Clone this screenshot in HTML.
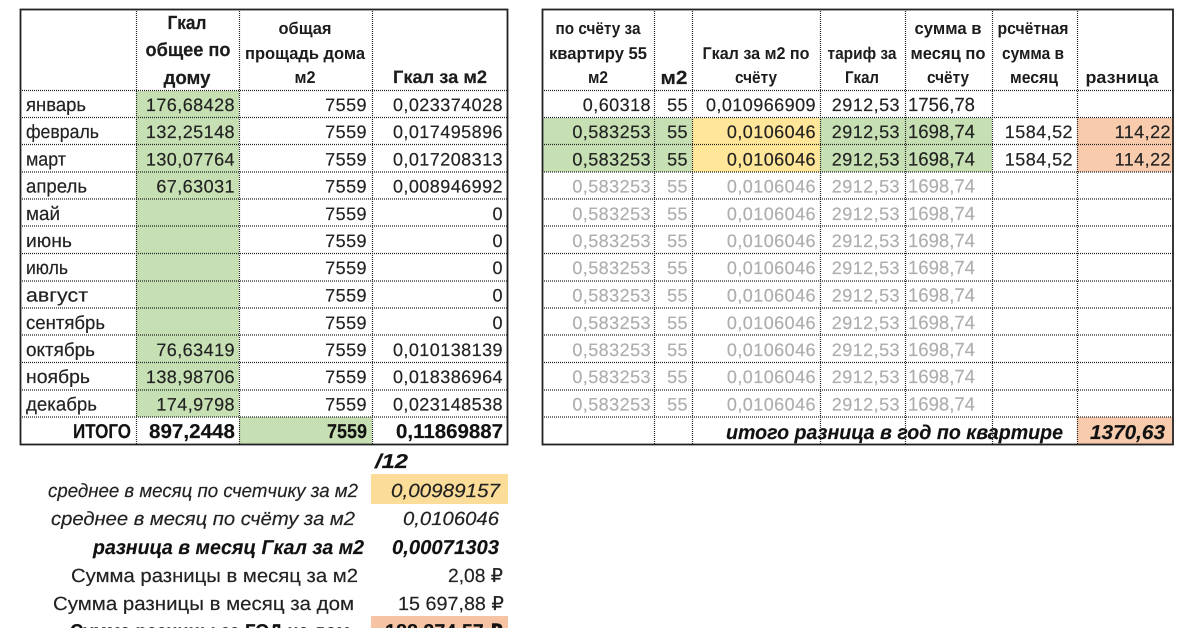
<!DOCTYPE html>
<html lang="ru">
<head>
<meta charset="utf-8">
<title>Таблица</title>
<style>
html,body{margin:0;padding:0;background:#fff;width:1200px;height:628px;overflow:hidden}
svg{display:block}
text{font-family:"Liberation Sans","DejaVu Sans",sans-serif;font-size:19px;fill:#222;stroke:#222;stroke-width:.18px;text-rendering:geometricPrecision}
.n{text-anchor:end;letter-spacing:.45px;font-size:18px}
.g{fill:#aeaeae;stroke:#aeaeae}
.h{font-weight:bold;font-size:19px;text-anchor:middle;fill:#1c1c1c}
.s{font-weight:bold;font-size:17px;text-anchor:middle;fill:#1c1c1c;stroke-width:0}
.b{font-weight:bold;font-size:20px;fill:#111}
.i{font-style:italic}
</style>
</head>
<body>
<svg width="1200" height="628" viewBox="0 0 1200 628" xmlns="http://www.w3.org/2000/svg">
<rect width="1200" height="628" fill="#fff"/>
<!-- fills -->
<rect x="136" y="91" width="103" height="326" fill="#c6e0b4"/>
<rect x="239" y="417" width="133" height="27" fill="#c6e0b4"/>
<rect x="542" y="118" width="150" height="54" fill="#c6e0b4"/>
<rect x="692" y="118" width="128" height="54" fill="#ffe699"/>
<rect x="820" y="118" width="172" height="54" fill="#c6e0b4"/>
<rect x="1077" y="118" width="96" height="54" fill="#f8cbad"/>
<rect x="1077" y="417" width="96" height="27" fill="#f8cbad"/>
<rect x="371" y="474" width="137" height="30" fill="#fbdc98"/>
<rect x="371" y="616" width="137" height="12" fill="#f6c4a4"/>
<!-- grid -->
<g fill="none" stroke="#222" stroke-width="1.200" stroke-dasharray="1 1">
<path d="M20 90.500H507M20 117.500H507M20 144.500H507M20 172H507M20 199H507M20 226H507M20 253.500H507M20 281H507M20 308H507M20 335H507M20 362.500H507M20 390H507M20 417H507"/>
<path d="M136.500 9V444M239.500 9V444M372.500 9V444"/>
<path d="M542 90.500H1173M542 117.500H1173M542 144.500H1173M542 172H1173M542 199H1173M542 226H1173M542 253.500H1173M542 281H1173M542 308H1173M542 335H1173M542 362.500H1173M542 390H1173M542 417H1173"/>
<path d="M654.500 9V444M692.500 9V444M820.500 9V444M905.500 9V444M992.500 9V444M1077.500 9V444"/>
</g>
<rect x="20.500" y="9.500" width="487" height="435" fill="none" stroke="#222" stroke-width="1.800"/>
<rect x="542.500" y="9.500" width="630.500" height="435" fill="none" stroke="#222" stroke-width="1.800"/>

<!-- table 1 header -->
<text class="h" x="187" y="29" textLength="39" lengthAdjust="spacingAndGlyphs">Гкал</text>
<text class="h" x="188" y="56" textLength="85" lengthAdjust="spacingAndGlyphs">общее по</text>
<text class="h" x="187" y="84" textLength="47" lengthAdjust="spacingAndGlyphs">дому</text>
<text class="s" x="305" y="34" textLength="53" lengthAdjust="spacingAndGlyphs">общая</text>
<text class="s" x="305" y="59" textLength="120" lengthAdjust="spacingAndGlyphs">прощадь дома</text>
<text class="s" x="305" y="83" textLength="21" lengthAdjust="spacingAndGlyphs">м2</text>
<text class="h" x="440" y="83" textLength="94" lengthAdjust="spacingAndGlyphs" style="font-size:18px">Гкал за м2</text>

<!-- table 1 labels -->
<text x="26" y="111" textLength="60" lengthAdjust="spacingAndGlyphs">январь</text>
<text x="26" y="138" textLength="73" lengthAdjust="spacingAndGlyphs">февраль</text>
<text x="26" y="165.500" textLength="40" lengthAdjust="spacingAndGlyphs">март</text>
<text x="26" y="192.500" textLength="61" lengthAdjust="spacingAndGlyphs">апрель</text>
<text x="26" y="220" textLength="34" lengthAdjust="spacingAndGlyphs">май</text>
<text x="26" y="247" textLength="46" lengthAdjust="spacingAndGlyphs">июнь</text>
<text x="26" y="274" textLength="42" lengthAdjust="spacingAndGlyphs">июль</text>
<text x="26" y="301.500" textLength="62" lengthAdjust="spacingAndGlyphs">август</text>
<text x="26" y="329" textLength="79" lengthAdjust="spacingAndGlyphs">сентябрь</text>
<text x="26" y="356" textLength="69" lengthAdjust="spacingAndGlyphs">октябрь</text>
<text x="26" y="383" textLength="64" lengthAdjust="spacingAndGlyphs">ноябрь</text>
<text x="26" y="410.500" textLength="71" lengthAdjust="spacingAndGlyphs">декабрь</text>
<!-- table 1 col 1 -->
<text class="n" x="235" y="111">176,68428</text>
<text class="n" x="235" y="138">132,25148</text>
<text class="n" x="235" y="165.500">130,07764</text>
<text class="n" x="235" y="192.500">67,63031</text>
<text class="n" x="235" y="356">76,63419</text>
<text class="n" x="235" y="383">138,98706</text>
<text class="n" x="235" y="410.500">174,9798</text>
<!-- table 1 col 2 -->
<text class="n" x="367" y="111">7559</text>
<text class="n" x="367" y="138">7559</text>
<text class="n" x="367" y="165.500">7559</text>
<text class="n" x="367" y="192.500">7559</text>
<text class="n" x="367" y="220">7559</text>
<text class="n" x="367" y="247">7559</text>
<text class="n" x="367" y="274">7559</text>
<text class="n" x="367" y="301.500">7559</text>
<text class="n" x="367" y="329">7559</text>
<text class="n" x="367" y="356">7559</text>
<text class="n" x="367" y="383">7559</text>
<text class="n" x="367" y="410.500">7559</text>
<!-- table 1 col 3 -->
<text class="n" x="503" y="111">0,023374028</text>
<text class="n" x="503" y="138">0,017495896</text>
<text class="n" x="503" y="165.500">0,017208313</text>
<text class="n" x="503" y="192.500">0,008946992</text>
<text class="n" x="503" y="220">0</text>
<text class="n" x="503" y="247">0</text>
<text class="n" x="503" y="274">0</text>
<text class="n" x="503" y="301.500">0</text>
<text class="n" x="503" y="329">0</text>
<text class="n" x="503" y="356">0,010138139</text>
<text class="n" x="503" y="383">0,018386964</text>
<text class="n" x="503" y="410.500">0,023148538</text>
<!-- table 1 total -->
<text class="b" x="73" y="438" textLength="58" lengthAdjust="spacingAndGlyphs">ИТОГО</text>
<text class="b" x="149" y="438" textLength="86" lengthAdjust="spacingAndGlyphs">897,2448</text>
<text class="b" x="327" y="438" textLength="40" lengthAdjust="spacingAndGlyphs">7559</text>
<text class="b" x="396" y="438" textLength="107" lengthAdjust="spacingAndGlyphs">0,11869887</text>

<!-- table 2 header -->
<text class="s" x="598" y="34" textLength="85" lengthAdjust="spacingAndGlyphs">по счёту за</text>
<text class="s" x="598" y="59" textLength="98" lengthAdjust="spacingAndGlyphs">квартиру 55</text>
<text class="s" x="598" y="83" textLength="20" lengthAdjust="spacingAndGlyphs">м2</text>
<text class="h" x="674" y="84" textLength="27" lengthAdjust="spacingAndGlyphs">м2</text>
<text class="s" x="756" y="59" textLength="107" lengthAdjust="spacingAndGlyphs">Гкал за м2 по</text>
<text class="s" x="756" y="83" textLength="42" lengthAdjust="spacingAndGlyphs">счёту</text>
<text class="s" x="862" y="59" textLength="69" lengthAdjust="spacingAndGlyphs">тариф за</text>
<text class="s" x="862" y="83" textLength="34" lengthAdjust="spacingAndGlyphs">Гкал</text>
<text class="s" x="948" y="34" textLength="67" lengthAdjust="spacingAndGlyphs">сумма в</text>
<text class="s" x="948" y="59" textLength="75" lengthAdjust="spacingAndGlyphs">месяц по</text>
<text class="s" x="948" y="83" textLength="42" lengthAdjust="spacingAndGlyphs">счёту</text>
<text class="s" x="1033" y="34" textLength="71" lengthAdjust="spacingAndGlyphs">рсчётная</text>
<text class="s" x="1033" y="59" textLength="62" lengthAdjust="spacingAndGlyphs">сумма в</text>
<text class="s" x="1034" y="83" textLength="48" lengthAdjust="spacingAndGlyphs">месяц</text>
<text class="s" x="1122" y="83" textLength="73" lengthAdjust="spacingAndGlyphs">разница</text>

<!-- table 2 rows -->
<text class="n" x="651" y="111">0,60318</text><text class="n" x="688" y="111">55</text><text class="n" x="816" y="111">0,010966909</text><text class="n" x="900" y="111">2912,53</text><text x="908" y="111" textLength="67" lengthAdjust="spacingAndGlyphs">1756,78</text>

<text class="n" x="651" y="138">0,583253</text><text class="n" x="688" y="138">55</text><text class="n" x="816" y="138">0,0106046</text><text class="n" x="900" y="138">2912,53</text><text x="908" y="138" textLength="67" lengthAdjust="spacingAndGlyphs">1698,74</text><text class="n" x="1073" y="138">1584,52</text><text class="n" x="1171" y="138">114,22</text>

<text class="n" x="651" y="165.500">0,583253</text><text class="n" x="688" y="165.500">55</text><text class="n" x="816" y="165.500">0,0106046</text><text class="n" x="900" y="165.500">2912,53</text><text x="908" y="165.500" textLength="67" lengthAdjust="spacingAndGlyphs">1698,74</text><text class="n" x="1073" y="165.500">1584,52</text><text class="n" x="1171" y="165.500">114,22</text>

<text class="n g" x="651" y="192.500">0,583253</text><text class="n g" x="688" y="192.500">55</text><text class="n g" x="816" y="192.500">0,0106046</text><text class="n g" x="900" y="192.500">2912,53</text><text class="g" x="908" y="192.500" textLength="67" lengthAdjust="spacingAndGlyphs">1698,74</text>
<text class="n g" x="651" y="220">0,583253</text><text class="n g" x="688" y="220">55</text><text class="n g" x="816" y="220">0,0106046</text><text class="n g" x="900" y="220">2912,53</text><text class="g" x="908" y="220" textLength="67" lengthAdjust="spacingAndGlyphs">1698,74</text>
<text class="n g" x="651" y="247">0,583253</text><text class="n g" x="688" y="247">55</text><text class="n g" x="816" y="247">0,0106046</text><text class="n g" x="900" y="247">2912,53</text><text class="g" x="908" y="247" textLength="67" lengthAdjust="spacingAndGlyphs">1698,74</text>
<text class="n g" x="651" y="274">0,583253</text><text class="n g" x="688" y="274">55</text><text class="n g" x="816" y="274">0,0106046</text><text class="n g" x="900" y="274">2912,53</text><text class="g" x="908" y="274" textLength="67" lengthAdjust="spacingAndGlyphs">1698,74</text>
<text class="n g" x="651" y="301.500">0,583253</text><text class="n g" x="688" y="301.500">55</text><text class="n g" x="816" y="301.500">0,0106046</text><text class="n g" x="900" y="301.500">2912,53</text><text class="g" x="908" y="301.500" textLength="67" lengthAdjust="spacingAndGlyphs">1698,74</text>
<text class="n g" x="651" y="329">0,583253</text><text class="n g" x="688" y="329">55</text><text class="n g" x="816" y="329">0,0106046</text><text class="n g" x="900" y="329">2912,53</text><text class="g" x="908" y="329" textLength="67" lengthAdjust="spacingAndGlyphs">1698,74</text>
<text class="n g" x="651" y="356">0,583253</text><text class="n g" x="688" y="356">55</text><text class="n g" x="816" y="356">0,0106046</text><text class="n g" x="900" y="356">2912,53</text><text class="g" x="908" y="356" textLength="67" lengthAdjust="spacingAndGlyphs">1698,74</text>
<text class="n g" x="651" y="383">0,583253</text><text class="n g" x="688" y="383">55</text><text class="n g" x="816" y="383">0,0106046</text><text class="n g" x="900" y="383">2912,53</text><text class="g" x="908" y="383" textLength="67" lengthAdjust="spacingAndGlyphs">1698,74</text>
<text class="n g" x="651" y="410.500">0,583253</text><text class="n g" x="688" y="410.500">55</text><text class="n g" x="816" y="410.500">0,0106046</text><text class="n g" x="900" y="410.500">2912,53</text><text class="g" x="908" y="410.500" textLength="67" lengthAdjust="spacingAndGlyphs">1698,74</text>

<text class="b i" x="726" y="439" textLength="337" lengthAdjust="spacingAndGlyphs">итого разница в год по квартире</text>
<text class="b i" x="1090" y="439" textLength="75" lengthAdjust="spacingAndGlyphs">1370,63</text>

<!-- summary -->
<text class="b i" x="375" y="468" textLength="33" lengthAdjust="spacingAndGlyphs">/12</text>
<text class="i" x="48" y="497" textLength="310" lengthAdjust="spacingAndGlyphs">среднее в месяц по счетчику за м2</text>
<text class="i" x="391" y="497" textLength="109" lengthAdjust="spacingAndGlyphs">0,00989157</text>
<text class="i" x="51" y="525" textLength="304" lengthAdjust="spacingAndGlyphs">среднее в месяц по счёту за м2</text>
<text class="i" x="403" y="525" textLength="96" lengthAdjust="spacingAndGlyphs">0,0106046</text>
<text class="b i" x="93" y="554" textLength="271" lengthAdjust="spacingAndGlyphs">разница в месяц Гкал за м2</text>
<text class="b i" x="392" y="554" textLength="107" lengthAdjust="spacingAndGlyphs">0,00071303</text>
<text x="71" y="582" textLength="287" lengthAdjust="spacingAndGlyphs">Сумма разницы в месяц за м2</text>
<text x="448" y="582" textLength="55" lengthAdjust="spacingAndGlyphs">2,08 ₽</text>
<text x="53" y="610" textLength="301" lengthAdjust="spacingAndGlyphs">Сумма разницы в месяц за дом</text>
<text x="398" y="610" textLength="106" lengthAdjust="spacingAndGlyphs">15 697,88 ₽</text>
<text class="b" x="70" y="638" textLength="280" lengthAdjust="spacingAndGlyphs">Сумма разницы за ГОД на дом</text>
<text class="b" x="385" y="638" textLength="118" lengthAdjust="spacingAndGlyphs">188 374,57 ₽</text>
</svg>
</body>
</html>
